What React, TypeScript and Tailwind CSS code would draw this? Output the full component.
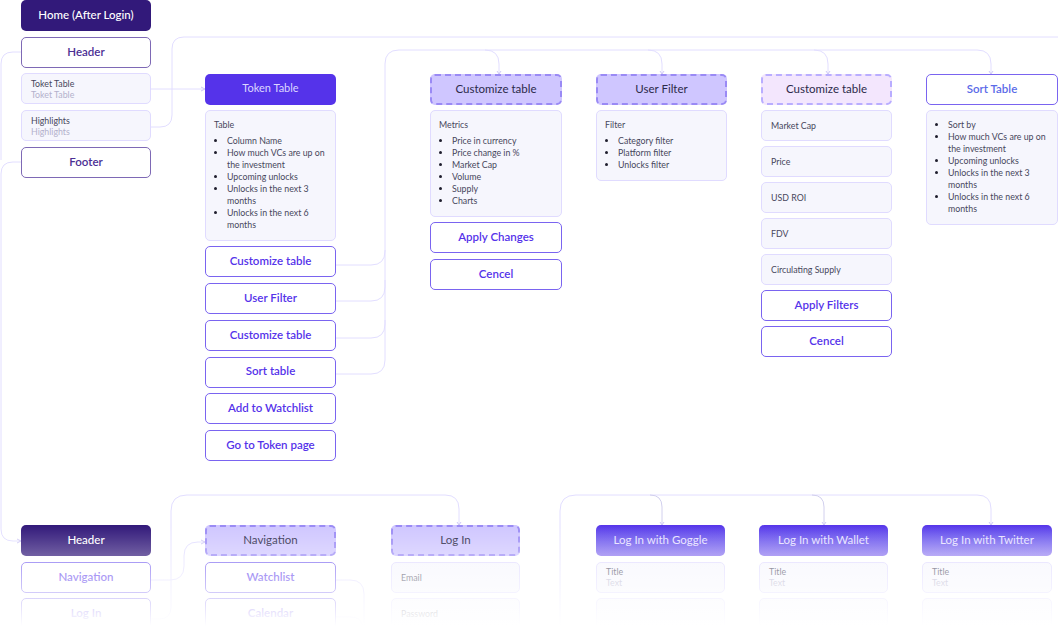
import React from "react";

type BtnProps = { label: string; className?: string };

const base = "h-[31px] shrink-0 rounded-[5px] flex items-center justify-center pb-[2px] text-[11.5px]";

function Btn({ label, className = "" }: BtnProps) {
  return (
    <div className={`${base} bg-white border border-[#7a64f0] text-[#5533ea] font-semibold ${className}`}>
      {label}
    </div>
  );
}

function Head({ label, className = "" }: BtnProps) {
  return <div className={`${base} ${className}`}>{label}</div>;
}

function Dashed({ label, className = "bg-[#cfc6ff] border-[#9a8af5]" }: BtnProps) {
  return (
    <div className={`${base} border-2 border-dashed text-[#2c2a4a] ${className}`}>
      {label}
    </div>
  );
}

function Cell({ title, sub }: { title: string; sub?: string }) {
  return (
    <div className="h-[31px] shrink-0 rounded-[5px] bg-[#f6f6fd] border border-[#e0dbff] pl-[9px] flex flex-col justify-center text-[8.8px] leading-[11px]">
      <span className="text-[#47465c]">{title}</span>
      {sub && <span className="text-[#b3b1cc]">{sub}</span>}
    </div>
  );
}

function Panel({ title, items }: { title?: string; items: string[] }) {
  return (
    <div className="rounded-[5px] bg-[#f6f6fd] border border-[#e0dbff] pt-[8px] pb-[9px] px-[8px] text-[8.8px] leading-[12px] text-[#47465c]">
      {title && <div className="mb-[4px]">{title}</div>}
      <ul className="list-disc pl-[13px] marker:text-[#1f1e2e]">
        {items.map((t) => (
          <li key={t}>{t}</li>
        ))}
      </ul>
    </div>
  );
}

const tableRows = [
  "Column Name",
  "How much VCs are up on the investment",
  "Upcoming unlocks",
  "Unlocks in the next 3 months",
  "Unlocks in the next 6 months",
];

function Connectors() {
  const lines = [
    // left rail
    "M21 52 H13 Q1 52 1 64 V160",
    "M21 162 H13 Q1 162 1 174 V529 Q1 541 13 541 H21",
    // token table
    "M150 89 H205",
    "M150 127 H160 Q172 127 172 115 V49 Q172 37 184 37 H1058",
    // top rail
    "M336 265 H371 Q385 265 385 251 V64 Q385 50 399 50 H814 Q828 50 828 64 V74",
    "M336 301 H371 Q385 301 385 287 V250",
    "M336 338 H371 Q385 338 385 324 V280",
    "M336 374 H371 Q385 374 385 360 V320",
    "M485 50 Q499 50 499 64 V74",
    "M648 50 Q662 50 662 64 V74",
    "M814 50 H977 Q991 50 991 64 V74",
    // bottom left
    "M150 580 H170 Q184 580 184 566 V556 Q184 542 198 542 H205",
    "M150 619 H159 Q171 619 171 607 V511 Q171 495 187 495 H445 Q459 495 459 509 V525",
    "M336 580 H350 Q364 580 364 594 V626",
    "M336 617 H350 Q362 617 362 626",
    // bottom right
    "M560 626 V511 Q560 495 576 495 H977 Q991 495 991 509 V525",
  ];
  const branches = ["M650 495 Q662 495 662 507 V525", "M812 495 Q824 495 824 507 V525"];
  const arrows = [
    "M201 87 L205 89 L201 91",
    "M17 539 L21 541 L17 543",
    "M201 540 L205 542 L201 544",
    "M497 71 L499 74 L501 71",
    "M660 71 L662 74 L664 71",
    "M826 71 L828 74 L830 71",
    "M989 71 L991 74 L993 71",
    "M457 522 L459 525 L461 522",
    "M660 522 L662 525 L664 522",
    "M822 522 L824 525 L826 522",
    "M989 522 L991 525 L993 522",
  ];
  return (
    <svg className="absolute inset-0" width={1058} height={626} fill="none" stroke="#e2deff" strokeWidth={1}>
      {lines.map((d) => (
        <path key={d} d={d} />
      ))}
      {branches.map((d) => (
        <path key={d} d={d} stroke="#d2d0ee" />
      ))}
      {arrows.map((d) => (
        <path key={d} d={d} stroke="#cfc8f5" />
      ))}
    </svg>
  );
}

export default function App() {
  return (
    <div
      className="relative w-[1058px] h-[626px] overflow-hidden bg-white"
      style={{ fontFamily: '"Lato", "Noto Sans", sans-serif' }}
    >
      <Connectors />

      <div className="relative flex h-[525px] pl-[21px]">
        <div className="w-[130px] flex flex-col gap-[5.7px]">
          <Head label="Home (After Login)" className="bg-[#32197a] text-white font-medium" />
          <div className={`${base} bg-white border border-[#7e69b5] text-[#4b2f94] font-semibold`}>Header</div>
          <Cell title="Toket Table" sub="Toket Table" />
          <Cell title="Highlights" sub="Highlights" />
          <div className={`${base} bg-white border border-[#7e69b5] text-[#4b2f94] font-semibold`}>Footer</div>
        </div>

        <div className="w-[131px] ml-[54px] pt-[74px] flex flex-col gap-[5px]">
          <Head label="Token Table" className="bg-[#5533ea] text-[#dcd6ff] text-[11px]" />
          <Panel title="Table" items={tableRows} />
          <div className="flex flex-col gap-[5.85px]">
            <Btn label="Customize table" />
            <Btn label="User Filter" />
            <Btn label="Customize table" />
            <Btn label="Sort table" />
            <Btn label="Add to Watchlist" />
            <Btn label="Go to Token page" />
          </div>
        </div>

        <div className="w-[132px] ml-[94px] pt-[74px] flex flex-col gap-[5px]">
          <Dashed label="Customize table" />
          <Panel
            title="Metrics"
            items={["Price in currency", "Price change in %", "Market Cap", "Volume", "Supply", "Charts"]}
          />
          <div className="flex flex-col gap-[5.7px]">
            <Btn label="Apply Changes" />
            <Btn label="Cencel" />
          </div>
        </div>

        <div className="w-[131px] ml-[34px] pt-[74px] flex flex-col gap-[5px]">
          <Dashed label="User Filter" />
          <Panel title="Filter" items={["Category filter", "Platform filter", "Unlocks filter"]} />
        </div>

        <div className="w-[131px] ml-[34px] pt-[74px] flex flex-col gap-[5px]">
          <Dashed label="Customize table" className="bg-[#f3e6fd] border-[#b9adff]" />
          <Cell title="Market Cap" />
          <Cell title="Price" />
          <Cell title="USD ROI" />
          <Cell title="FDV" />
          <Cell title="Circulating Supply" />
          <Btn label="Apply Filters" />
          <Btn label="Cencel" />
        </div>

        <div className="w-[132px] ml-[34px] pt-[74px] flex flex-col gap-[5px]">
          <div className={`${base} bg-white border border-[#7a64f0] text-[#5b6be8] font-semibold`}>Sort Table</div>
          <Panel items={["Sort by", ...tableRows.slice(1)]} />
        </div>
      </div>

      <div className="relative flex pl-[21px]">
        <div className="w-[130px] flex flex-col gap-[5.7px]">
          <Head label="Header" className="bg-[#32197a] text-white font-medium" />
          <Btn label="Navigation" />
          <Btn label="Log In" />
        </div>

        <div className="w-[131px] ml-[54px] flex flex-col gap-[5.7px]">
          <Dashed label="Navigation" />
          <Btn label="Watchlist" />
          <Btn label="Calendar" />
        </div>

        <div className="w-[129px] ml-[55px] flex flex-col gap-[5.7px]">
          <Dashed label="Log In" />
          <Cell title="Email" />
          <Cell title="Password" />
        </div>

        <div className="w-[129px] ml-[76px] flex flex-col gap-[5.7px]">
          <Head
            label="Log In with Goggle"
            className="bg-gradient-to-b from-[#5533ea] to-[#8d77f0] text-[#e6e1ff]"
          />
          <Cell title="Title" sub="Text" />
          <Cell title="" />
        </div>

        <div className="w-[129px] ml-[34px] flex flex-col gap-[5.7px]">
          <Head
            label="Log In with Wallet"
            className="bg-gradient-to-b from-[#5533ea] to-[#8d77f0] text-[#e6e1ff]"
          />
          <Cell title="Title" sub="Text" />
          <Cell title="" />
        </div>

        <div className="w-[130px] ml-[34px] flex flex-col gap-[5.7px]">
          <Head
            label="Log In with Twitter"
            className="bg-gradient-to-b from-[#5533ea] to-[#9a86f2] text-[#e6e1ff]"
          />
          <Cell title="Title" sub="Text" />
          <Cell title="" />
        </div>
      </div>

      {/* the lower flow fades out to white */}
      <div className="absolute inset-x-0 bottom-0 h-[101px] bg-gradient-to-b from-white/0 to-white" />
    </div>
  );
}
